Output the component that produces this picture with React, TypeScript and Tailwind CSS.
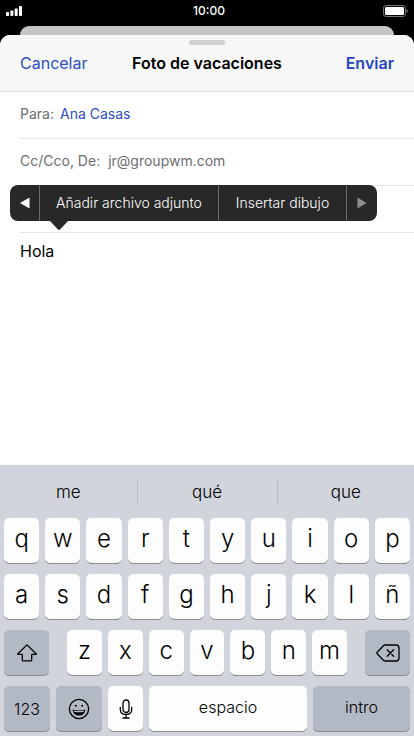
import type { ReactNode } from "react";

type KeyProps = { children: ReactNode; className?: string; label?: string; dark?: boolean };

function Key({ children, className = "flex-1", label, dark = false }: KeyProps) {
  return (
    <button
      type="button"
      aria-label={label}
      className={`flex h-[45px] min-w-0 items-center justify-center rounded-[5px] shadow-[0_1px_0_#898b90] ${
        dark ? "bg-[#b3b8c5]" : "bg-[#fdfdfd]"
      } ${className}`}
    >
      {children}
    </button>
  );
}

function Letters({ keys }: { keys: string }) {
  return (
    <>
      {keys.split("").map((k) => (
        <Key key={k}>
          <span className="pb-1 text-2xl leading-7 font-light">{k}</span>
        </Key>
      ))}
    </>
  );
}

function StatusBar() {
  return (
    <div className="grid h-[26px] grid-cols-3 items-center px-[6px] pb-[6px] text-white">
      <svg width="16" height="10" viewBox="0 0 16 10" fill="currentColor" aria-hidden="true">
        <rect x="0" y="6" width="3" height="4" rx="0.8" />
        <rect x="4.4" y="4.4" width="3" height="5.6" rx="0.8" />
        <rect x="8.7" y="2.4" width="3" height="7.6" rx="0.8" />
        <rect x="13" y="0" width="3" height="10" rx="0.8" />
      </svg>
      <span className="pt-px pl-1 text-center text-xs leading-5 font-medium">10:00</span>
      <svg className="justify-self-end" width="26" height="12" viewBox="0 0 26 12" aria-hidden="true">
        <rect x="1.500" y="0.500" width="22" height="11" rx="2.600" fill="none" stroke="#777" />
        <rect x="3" y="2" width="19" height="8" rx="1.200" fill="#fff" />
        <path d="M24.600 4v4c.8-.3 1.200-1 1.200-2s-.4-1.700-1.200-2z" fill="#777" />
      </svg>
    </div>
  );
}

function EditMenu() {
  return (
    <div className="absolute -top-px left-[10px] z-10 h-9 text-sm font-light text-white">
      <div className="flex h-9 divide-x divide-[#6b6b6b] overflow-hidden rounded-lg bg-[#282828]">
        <button type="button" aria-label="Anterior" className="flex w-[30px] items-center justify-center">
          <svg width="10" height="12" viewBox="0 0 10 12" fill="#fff" aria-hidden="true">
            <path d="M0 6 9.500 0.600v10.800z" />
          </svg>
        </button>
        <button type="button" className="w-[179px]">Añadir archivo adjunto</button>
        <button type="button" className="w-[128px]">Insertar dibujo</button>
        <button type="button" aria-label="Siguiente" className="flex w-[30px] items-center justify-center">
          <svg width="10" height="12" viewBox="0 0 10 12" fill="#8e8e8e" aria-hidden="true">
            <path d="M9.500 6 0.500 0.600v10.800z" />
          </svg>
        </button>
      </div>
      <svg className="ml-10" width="18" height="9" viewBox="0 0 18 9" fill="#282828" aria-hidden="true">
        <path d="M0 0h18L10 8.400q-1 .9-2 0z" />
      </svg>
    </div>
  );
}

function Keyboard() {
  return (
    <section aria-label="Teclado" className="bg-[#d1d4db] px-1 pb-[5px] text-black">
      <div className="flex h-[53px] items-center divide-x divide-[#b7bac1] text-[17px] font-light text-black">
        <button type="button" className="h-6 flex-1 pr-1 leading-6">me</button>
        <button type="button" className="h-6 w-[140px] leading-6">qué</button>
        <button type="button" className="h-6 flex-1 pl-1 leading-6">que</button>
      </div>
      <div className="flex flex-col gap-[11px]">
        <div className="flex gap-[6px]">
          <Letters keys="qwertyuiop" />
        </div>
        <div className="flex gap-[6px]">
          <Letters keys="asdfghjklñ" />
        </div>
        <div className="flex gap-[18px]">
          <Key dark label="Mayúsculas" className="w-[45px]">
            <svg width="20" height="18" viewBox="0 0 20 18" fill="none" stroke="#000" strokeWidth="1.300" strokeLinejoin="round" aria-hidden="true">
              <path d="M10 .9.900 9.800q-.4.600.300.600H5.300v5.500q0 1 1 1h7.400q1 0 1-1v-5.500h4.100q.7 0 .3-.6z" />
            </svg>
          </Key>
          <div className="flex flex-1 gap-[6px]">
            <Letters keys="zxcvbnm" />
          </div>
          <Key dark label="Borrar" className="w-[45px]">
            <svg width="24" height="18" viewBox="0 0 24 18" fill="none" stroke="#000" strokeWidth="1.300" strokeLinecap="round" strokeLinejoin="round" aria-hidden="true">
              <path d="M9.300 1H20q3 0 3 3v10q0 3-3 3H9.300q-1.100 0-1.900-.8L1.400 10q-.9-1 0-2l6-6.200Q8.200 1 9.300 1z" />
              <path d="m11.200 5.800 6.400 6.400m0-6.400-6.400 6.400" />
            </svg>
          </Key>
        </div>
        <div className="flex gap-[6px] text-base font-light">
          <Key dark className="w-[46px]">123</Key>
          <Key dark label="Emoji" className="w-[46px]">
            <svg width="22" height="22" viewBox="0 0 22 22" fill="none" stroke="#000" strokeWidth="1.300" aria-hidden="true">
              <circle cx="11" cy="11" r="9.600" />
              <circle cx="7.800" cy="7.800" r="1" fill="#000" stroke="none" />
              <circle cx="14.200" cy="7.800" r="1" fill="#000" stroke="none" />
              <path d="M4.600 11.500q6.400 2 12.800 0-.6 6-6.400 6t-6.400-6z" fill="#000" stroke="none" />
              <path d="M6 13.100q5 1.200 10 0" strokeWidth="1.200" stroke="#b3b8c5" />
            </svg>
          </Key>
          <Key label="Dictado" className="w-[35px]">
            <svg width="14" height="20" viewBox="0 0 14 20" fill="none" stroke="#000" strokeWidth="1.300" strokeLinecap="round" aria-hidden="true">
              <rect x="4" y="1" width="6" height="12.500" rx="3" />
              <path d="M1.300 8.500v2q0 5 5.700 5t5.700-5v-2M7 15.500V19M4 19h6" />
            </svg>
          </Key>
          <Key className="flex-1">
            <span className="pb-1">espacio</span>
          </Key>
          <Key dark className="w-[97px]">
            <span className="pb-1">intro</span>
          </Key>
        </div>
      </div>
    </section>
  );
}

export default function App() {
  return (
    <main className="flex min-h-screen flex-col bg-black font-['Inter','Liberation_Sans',sans-serif]">
      <StatusBar />
      <div className="mx-5 h-[9px] rounded-t-[10px] bg-[#c5c5c5]" />
      <div className="flex flex-1 flex-col overflow-hidden rounded-t-[10px] bg-white">
        <header className="border-b border-[#dfdfdf] bg-[#f7f7f7] pt-[5px]">
          <div className="mx-auto h-[5px] w-9 rounded-full bg-[#cfcfcf]" />
          <div className="grid h-[46px] grid-cols-[1fr_auto_1fr] items-center px-5 pb-[10px] text-base">
            <button type="button" className="justify-self-start text-[#2b4fc4]">Cancelar</button>
            <h1 className="font-semibold text-black">Foto de vacaciones</h1>
            <button type="button" className="justify-self-end font-semibold text-[#2446bd]">Enviar</button>
          </div>
        </header>
        <form className="flex flex-1 flex-col pl-5 text-sm text-[#6d6d70]">
          <div className="flex h-[47px] items-center gap-[6px] border-b border-[#e6e6e6] pb-[2px]">
            <label htmlFor="to">Para:</label>
            <input id="to" defaultValue="Ana Casas" className="min-w-0 flex-1 text-[#2b4fc4] outline-none" />
          </div>
          <div className="flex h-[47px] items-center gap-2 border-b border-[#e6e6e6] pb-[2px]">
            <label htmlFor="from">Cc/Cco, De:</label>
            <input id="from" defaultValue="jr@groupwm.com" className="min-w-0 flex-1 outline-none" />
          </div>
          <div className="relative -ml-5 h-[47px] pl-5">
            <input aria-label="Asunto" className="h-full w-full border-b border-[#e6e6e6] outline-none" />
            <EditMenu />
          </div>
          <textarea
            aria-label="Mensaje"
            defaultValue="Hola"
            className="w-full flex-1 resize-none pt-[6px] text-base leading-6 text-black outline-none"
          />
        </form>
        <Keyboard />
      </div>
    </main>
  );
}
